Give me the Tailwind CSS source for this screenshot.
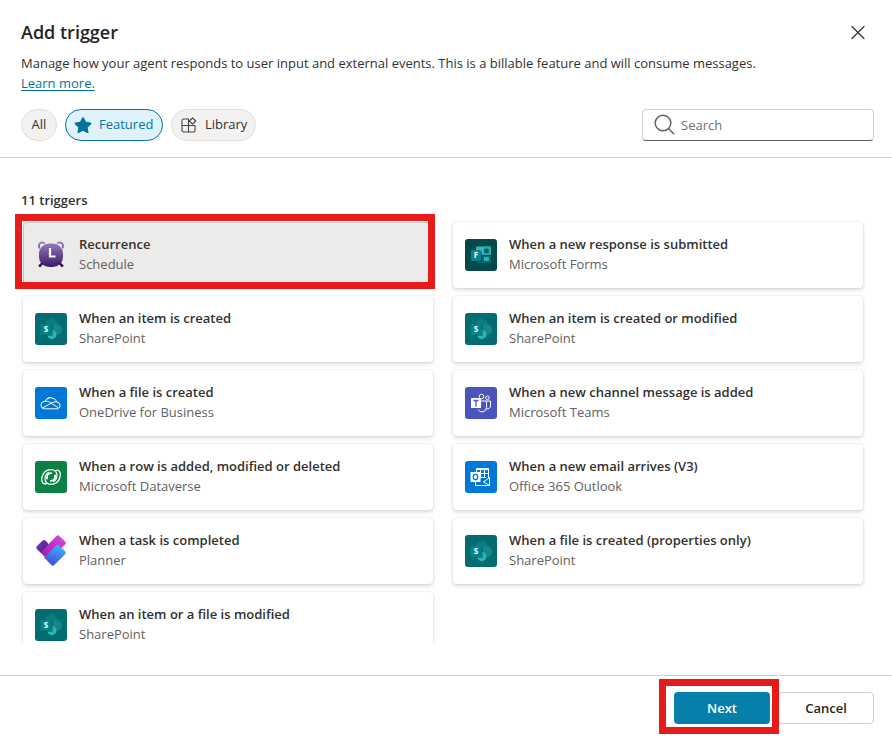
<!DOCTYPE html>
<html lang="en">
<head>
<meta charset="utf-8">
<meta name="viewport" content="width=device-width, initial-scale=1">
<title>Add trigger</title>
<script src="https://cdn.jsdelivr.net/npm/@tailwindcss/browser@4"></script>
</head>
<body class="bg-white font-['Open_Sans','Noto_Sans',sans-serif] text-[13px] leading-5 text-[#323130]">
<svg class="hidden" aria-hidden="true">
  <symbol id="sharepoint" viewBox="0 0 32 32">
    <rect width="32" height="32" rx="3" fill="#036c70"/>
    <circle cx="16.500" cy="11.500" r="6" fill="#0b7c80"/>
    <circle cx="21.700" cy="16.500" r="5.400" fill="#16868c"/>
    <circle cx="16.800" cy="21.500" r="4.700" fill="#2bb3bd"/>
    <rect x="7" y="12" width="11" height="11" rx="1" fill="#04474a" opacity=".45"/>
    <rect x="5.500" y="11" width="11" height="11" rx="1" fill="#038387"/>
    <text x="11" y="19.300" text-anchor="middle" font-family="Open Sans" font-weight="700" font-size="8" fill="#fff">S</text>
  </symbol>
</svg>
<div class="flex h-screen flex-col">
  <header class="border-b border-[#d1d1d1] pt-[18px] pr-[18px] pb-4 pl-[21px]">
    <div class="flex items-center justify-between">
      <h1 class="text-lg leading-7 font-semibold text-[#242424]">Add trigger</h1>
      <button type="button" aria-label="Close" class="-my-1 flex size-8 items-center justify-center">
        <svg class="size-4" viewBox="0 0 16 16" fill="none" stroke="#323130" stroke-width="1.200" stroke-linecap="round"><path d="M2 2.500 14 14.500M14 2.500 2 14.500"/></svg>
      </button>
    </div>
    <p class="mt-[7px]">Manage how your agent responds to user input and external events. This is a billable feature and will consume messages.<br><a href="#" class="text-[#04749c] underline underline-offset-2">Learn more.</a></p>
    <div class="mt-4 flex items-center gap-2">
      <button type="button" class="h-8 w-9 rounded-full border border-[#e1dfdd] bg-[#f3f2f1] pb-0.5">All</button>
      <button type="button" aria-pressed="true" class="flex h-8 min-w-[98px] items-center gap-[7px] rounded-full border border-[#04749c] bg-[#dff2fb] px-2 text-[#04749c]">
        <svg class="size-[18px]" viewBox="0 0 18 18" fill="#04749c"><path d="M8.100 1.700a1 1 0 0 1 1.800 0l2 4.100 4.600.700a1 1 0 0 1 .500 1.700l-3.300 3.200.800 4.500a1 1 0 0 1-1.400 1L9 14.800l-4.100 2.100a1 1 0 0 1-1.400-1l.800-4.500L1 8.200a1 1 0 0 1 .500-1.700l4.600-.700z"/></svg>
        <span class="pb-0.5">Featured</span></button>
      <button type="button" class="flex h-8 items-center gap-[7px] rounded-full border border-[#e1dfdd] bg-[#f3f2f1] px-2">
        <svg class="size-[18px]" viewBox="0 0 18 18" fill="none" stroke="#424242" stroke-width="1.100" stroke-linejoin="round"><path d="M9 3H3.500A1.500 1.500 0 0 0 2 4.500v10A1.500 1.500 0 0 0 3.500 16h10a1.500 1.500 0 0 0 1.500-1.500V9.500H2M8.500 3v13M12.500 1.800l3.200 3.200-3.200 3.200L9.300 5z"/></svg>
        <span class="pb-0.5">Library</span></button>
      <label class="ml-auto flex h-8 w-[232px] items-center gap-1 rounded-sm border border-[#d1d1d1] border-b-[#616161] pl-[10px]">
        <svg class="size-6 shrink-0" viewBox="0 0 24 24" fill="none" stroke="#616161" stroke-width="1.500" stroke-linecap="round"><circle cx="10" cy="10" r="7.800"/><path d="m15.700 15.700 5 5"/></svg>
        <input type="search" aria-label="Search" placeholder="Search" class="w-full min-w-0 outline-none placeholder:text-[#707070]">
      </label>
    </div>
  </header>

  <main class="flex min-h-0 flex-1 flex-col pt-8 pb-8">
    <h2 class="pl-[21px] font-semibold">11 triggers</h2>
    <ul class="grid min-h-0 flex-1 auto-rows-[66px] grid-cols-2 gap-x-5 gap-y-2 overflow-hidden pt-3 pr-[29px] pl-[23px]">
      <li class="relative">
        <button type="button" class="flex size-full items-center gap-3 rounded border border-[#c8c6c4] bg-[#edebe9] px-[11px] text-left">
          <svg class="size-8 shrink-0" viewBox="0 0 32 32">
            <defs><linearGradient id="clock" x1="0" y1="3" x2="0" y2="29" gradientUnits="userSpaceOnUse"><stop stop-color="#9a7fc0"/><stop offset="1" stop-color="#3a1463"/></linearGradient></defs>
            <g stroke="url(#clock)" fill="none" stroke-width="2"><circle cx="7.200" cy="6.800" r="3.300"/><circle cx="24.800" cy="6.800" r="3.300"/><path d="m7.500 24-3.500 3.500M24.500 24l3.500 3.500" stroke-width="2.400"/></g>
            <rect x="3.500" y="3.500" width="25" height="25" rx="11" fill="#edebe9"/><rect x="4" y="4.500" width="24" height="23.500" rx="10" fill="url(#clock)"/>
            <path d="m7.500 24-3 3.500M24.500 24l3 3.500" stroke="#3a1463" stroke-width="2.200"/>
            <path d="M15 9v8.500H20.500" fill="none" stroke="#fff" stroke-width="2.200"/>
          </svg>
          <span class="pb-0.5"><span class="block font-semibold">Recurrence</span><span class="block text-[#616161]">Schedule</span></span>
        </button>
        <span class="pointer-events-none absolute -top-2 -right-0.5 -bottom-px -left-2 border-7 border-[#e81b1b]"></span>
      </li>
      <li><button type="button" class="flex size-full items-center gap-3 rounded bg-white px-3 text-left shadow-[0_0_2px_rgba(0,0,0,0.12),0_2px_4px_rgba(0,0,0,0.14)]">
        <svg class="size-8 shrink-0" viewBox="0 0 32 32"><rect width="32" height="32" rx="3" fill="#03484a"/><path d="M11 17h15v6a1 1 0 0 1-1 1H12a1 1 0 0 1-1-1z" fill="#056b70"/><path d="M12 7.500h13a1 1 0 0 1 1 1V16H11V8.500a1 1 0 0 1 1-1z" fill="#35b8c1"/><path d="M18 7.500h8V16h-8z" fill="#2aa7b0"/><circle cx="21.500" cy="12" r="2.400" fill="#06595d"/><rect x="19" y="18" width="5" height="4" fill="#32adb5"/><rect x="7" y="12" width="10" height="11" rx="1" fill="#022f31" opacity=".5"/><rect x="6" y="11" width="10" height="11" rx="1" fill="#078489"/><text x="11" y="19.300" text-anchor="middle" font-family="Open Sans" font-weight="700" font-size="8" fill="#fff">F</text></svg>
        <span class="pb-0.5"><span class="block font-semibold">When a new response is submitted</span><span class="block text-[#616161]">Microsoft Forms</span></span>
      </button></li>
      <li><button type="button" class="flex size-full items-center gap-3 rounded bg-white px-3 text-left shadow-[0_0_2px_rgba(0,0,0,0.12),0_2px_4px_rgba(0,0,0,0.14)]">
        <svg class="size-8 shrink-0"><use href="#sharepoint"/></svg>
        <span class="pb-0.5"><span class="block font-semibold">When an item is created</span><span class="block text-[#616161]">SharePoint</span></span>
      </button></li>
      <li><button type="button" class="flex size-full items-center gap-3 rounded bg-white px-3 text-left shadow-[0_0_2px_rgba(0,0,0,0.12),0_2px_4px_rgba(0,0,0,0.14)]">
        <svg class="size-8 shrink-0"><use href="#sharepoint"/></svg>
        <span class="pb-0.5"><span class="block font-semibold">When an item is created or modified</span><span class="block text-[#616161]">SharePoint</span></span>
      </button></li>
      <li><button type="button" class="flex size-full items-center gap-3 rounded bg-white px-3 text-left shadow-[0_0_2px_rgba(0,0,0,0.12),0_2px_4px_rgba(0,0,0,0.14)]">
        <svg class="size-8 shrink-0" viewBox="0 0 32 32"><rect width="32" height="32" rx="3" fill="#0078d7"/><path d="M9.500 21.800a3.700 3.700 0 0 1 .3-7.400 6.700 6.700 0 0 1 12.200.6 3.500 3.500 0 0 1 .7 6.800zM9.800 14.400c2-.5 3.500-.1 5 .8l8.800 5.800M7.500 21l8.300-4.700c2-1.100 3.800-1.700 6.200-1.300M11 13.200c1-1.600 2.800-2.800 5-2.800" fill="none" stroke="#fff" stroke-width="1" stroke-linejoin="round"/></svg>
        <span class="pb-0.5"><span class="block font-semibold">When a file is created</span><span class="block text-[#616161]">OneDrive for Business</span></span>
      </button></li>
      <li><button type="button" class="flex size-full items-center gap-3 rounded bg-white px-3 text-left shadow-[0_0_2px_rgba(0,0,0,0.12),0_2px_4px_rgba(0,0,0,0.14)]">
        <svg class="size-8 shrink-0" viewBox="0 0 32 32"><rect width="32" height="32" rx="3" fill="#4b53bc"/><g fill="none" stroke="#fff" stroke-width="1"><circle cx="16.500" cy="9.500" r="2.300"/><circle cx="22.500" cy="10.800" r="1.800"/><path d="M16 14h5.500v6.500a4.500 4.500 0 0 1-8.500 2M21.500 14H25.500v5a3 3 0 0 1-4 2.800"/></g><rect x="6" y="11" width="10" height="10" rx=".500" fill="#fff"/><path d="M8.500 13.500h5M11 13.500v6" stroke="#4b53bc" stroke-width="1.300"/></svg>
        <span class="pb-0.5"><span class="block font-semibold">When a new channel message is added</span><span class="block text-[#616161]">Microsoft Teams</span></span>
      </button></li>
      <li><button type="button" class="flex size-full items-center gap-3 rounded bg-white px-3 text-left shadow-[0_0_2px_rgba(0,0,0,0.12),0_2px_4px_rgba(0,0,0,0.14)]">
        <svg class="size-8 shrink-0" viewBox="0 0 32 32"><rect width="32" height="32" rx="3" fill="#088142"/><g fill="none" stroke="#fff" stroke-width="1.300" stroke-linecap="round"><path id="swirl" d="M12 22.300C8 24.200 5.800 20.500 7 16c1.200-4.500 4.800-7.300 9-7.300 4 0 6.300 2.500 6 6-.200 3-2 5-3.500 5.800"/><use href="#swirl" transform="rotate(180 16 16)"/><path d="M12 17.500c-.6-3 1.200-5.200 4.200-5.300M20 14.500c.6 3-1.200 5.200-4.200 5.300" stroke-width="1.800"/></g></svg>
        <span class="pb-0.5"><span class="block font-semibold">When a row is added, modified or deleted</span><span class="block text-[#616161]">Microsoft Dataverse</span></span>
      </button></li>
      <li><button type="button" class="flex size-full items-center gap-3 rounded bg-white px-3 text-left shadow-[0_0_2px_rgba(0,0,0,0.12),0_2px_4px_rgba(0,0,0,0.14)]">
        <svg class="size-8 shrink-0" viewBox="0 0 32 32"><rect width="32" height="32" rx="3" fill="#0078d7"/><g fill="none" stroke="#fff" stroke-width="1"><path d="M11.500 11V7.500h12V17M11.500 8.500h12M15.500 9v8M19.500 9v8M14 12.500h9.500M14 16.500h7M10.500 21v3.500h14v-8l-6 4.500M18 20.500l6.500 4"/></g><rect x="5.500" y="11" width="10" height="10" rx=".500" fill="#fff"/><ellipse cx="10.500" cy="16" rx="2.200" ry="2.700" fill="none" stroke="#0078d7" stroke-width="1.300"/></svg>
        <span class="pb-0.5"><span class="block font-semibold">When a new email arrives (V3)</span><span class="block text-[#616161]">Office 365 Outlook</span></span>
      </button></li>
      <li><button type="button" class="flex size-full items-center gap-3 rounded bg-white px-3 text-left shadow-[0_0_2px_rgba(0,0,0,0.12),0_2px_4px_rgba(0,0,0,0.14)]">
        <svg class="size-8 shrink-0" viewBox="0 0 32 32"><defs><linearGradient id="planPurple" x1="0" y1="0" x2="1" y2="1"><stop stop-color="#7b3fd0"/><stop offset="1" stop-color="#43116b"/></linearGradient><linearGradient id="planPink" x1="1" y1="0" x2="0" y2="1"><stop stop-color="#e548e0"/><stop offset="1" stop-color="#8a1ba3"/></linearGradient><linearGradient id="planBlue" x1=".700" y1="0" x2=".300" y2="1"><stop stop-color="#36b6f8"/><stop offset="1" stop-color="#4a45dd"/></linearGradient></defs>
          <path d="M7.300 5.800a2.400 2.400 0 0 1 3.400 0L14 9.500 6 18 1.800 14a2 2 0 0 1 0-2.800z" fill="url(#planPurple)"/><path d="M21.200 1.200a2.400 2.400 0 0 1 3.400 0l5.500 5.400a2 2 0 0 1 0 3L13 25.200 5.500 17.600z" fill="url(#planPink)"/><path d="M21 10.800a2.400 2.400 0 0 1 3.400 0l5.700 5.500a2 2 0 0 1 0 2.900L19.500 29.800a2.400 2.400 0 0 1-3.400 0L8.700 21.900l1 0z" fill="url(#planBlue)"/></svg>
        <span class="pb-0.5"><span class="block font-semibold">When a task is completed</span><span class="block text-[#616161]">Planner</span></span>
      </button></li>
      <li><button type="button" class="flex size-full items-center gap-3 rounded bg-white px-3 text-left shadow-[0_0_2px_rgba(0,0,0,0.12),0_2px_4px_rgba(0,0,0,0.14)]">
        <svg class="size-8 shrink-0"><use href="#sharepoint"/></svg>
        <span class="pb-0.5"><span class="block font-semibold">When a file is created (properties only)</span><span class="block text-[#616161]">SharePoint</span></span>
      </button></li>
      <li><button type="button" class="flex size-full items-center gap-3 rounded bg-white px-3 text-left shadow-[0_0_2px_rgba(0,0,0,0.12),0_2px_4px_rgba(0,0,0,0.14)]">
        <svg class="size-8 shrink-0"><use href="#sharepoint"/></svg>
        <span class="pb-0.5"><span class="block font-semibold">When an item or a file is modified</span><span class="block text-[#616161]">SharePoint</span></span>
      </button></li>
    </ul>
  </main>

  <footer class="flex justify-end gap-2 border-t border-[#d1d1d1] pt-4 pr-[18px] pb-[14px]">
    <div class="relative">
      <button type="button" class="h-8 w-24 rounded bg-[#077fab] font-semibold text-white">Next</button>
      <span class="pointer-events-none absolute -top-[13px] -right-[9px] -bottom-[10px] -left-[15px] z-10 border-7 border-[#e81b1b]"></span>
    </div>
    <button type="button" class="h-8 w-24 rounded border border-[#d1d1d1] bg-white font-semibold text-[#242424]">Cancel</button>
  </footer>
</div>
</body>
</html>
